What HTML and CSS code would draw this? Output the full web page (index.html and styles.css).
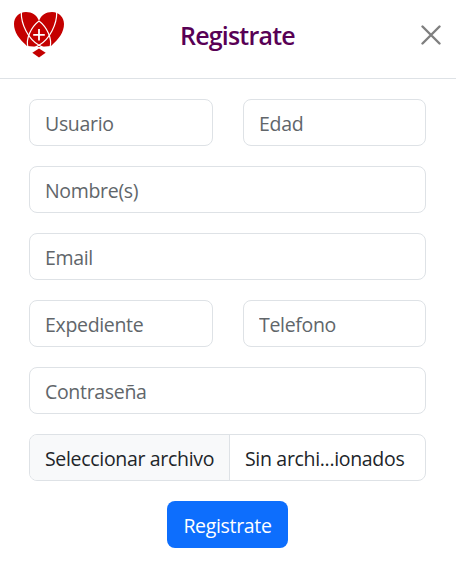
FILE: index.html
```html
<!DOCTYPE html>
<html lang="es">
<head>
<meta charset="utf-8">
<title>Registrate</title>
<link rel="stylesheet" href="styles.css">
</head>
<body>
<header class="header">
  <svg class="logo" viewBox="0 0 52 48">
    <path fill="#c40000" d="M14 35C6 28 1 21 1 13 1 6 6 1 13 1c6 0 11 3 13 9 2-6 7-9 13-9 7 0 12 5 12 12 0 8-5 15-13 22L26 36Z"/>
    <path fill="#c40000" d="m26 37.500 6.700 4.200-6.700 4.800-6.700-4.800Z"/>
    <g fill="none" stroke="#fff" stroke-width="1.200">
      <path d="M8.300 1C8 13 15 28 26 34.300c5 3 9 4 11 2.200C39.500 28 34 16 26 10"/>
      <path d="M43.700 1C44 13 37 28 26 34.300c-5 3-9 4-11 2.200C12.500 28 18 16 26 10"/>
      <path stroke-width="1.800" d="M26 18v11.500M20.200 23.800h11.600"/>
    </g>
  </svg>
  <h1 class="title">Registrate</h1>
  <button class="close" type="button" aria-label="Cerrar"><svg viewBox="0 0 20 20"><path d="m1.500 1.500 17 17m0-17-17 17"/></svg></button>
</header>
<form class="form">
  <div class="row"><input class="field" placeholder="Usuario"><input class="field" placeholder="Edad"></div>
  <input class="field" placeholder="Nombre(s)">
  <input class="field" placeholder="Email">
  <div class="row"><input class="field" placeholder="Expediente"><input class="field" placeholder="Telefono"></div>
  <input class="field" placeholder="Contraseña">
  <div class="file"><span class="file-button">Seleccionar archivo</span><span class="file-name">Sin archi...ionados</span></div>
  <button class="submit" type="button">Registrate</button>
</form>
</body>
</html>
```
FILE: styles.css
```css
* { box-sizing: border-box; }
body { margin: 0; background: #fff; color: #212529; font: 19.5px/30px "Open Sans", sans-serif; letter-spacing: -0.32px; }
.header { height: 79px; border-bottom: 1px solid #dee2e6; display: flex; justify-content: space-between; padding: 11px 15px 0 13px; }
.logo { width: 52px; height: 48px; }
.title { width: 118px; margin: 9px 8px 0 0; font: 600 25px/30px "Open Sans", sans-serif; letter-spacing: -0.8px; color: #580055; white-space: nowrap; }
.close { border: 0; background: none; padding: 0; width: 20px; height: 20px; margin-top: 14px; }
.close svg { display: block; width: 20px; height: 20px; fill: none; stroke: #7f7f7f; stroke-width: 2.4; stroke-linecap: round; }
.form { display: flex; flex-direction: column; gap: 20px; padding: 20px 30px 13px 29px; }
.row { display: grid; grid-template-columns: 184px 183px; gap: 30px; }
.field { width: 100%; height: 47px; padding: 1px 15px 0; border: 1px solid #dee2e6; border-radius: 8px; font: inherit; letter-spacing: inherit; color: #212529; }
.field::placeholder { color: #61666a; opacity: 1; }
.file { display: flex; height: 47px; border: 1px solid #dee2e6; border-radius: 8px; overflow: hidden; white-space: nowrap; }
.file-button { width: 200px; padding: 9px 15px; background: #f8f9fa; border-right: 1px solid #dee2e6; }
.file-name { padding: 9px 15px; }
.submit { align-self: center; width: 121px; height: 47px; padding: 3px 0 0; border: 0; border-radius: 8px; background: #0d6efd; color: #fff; font: inherit; letter-spacing: inherit; }
```
